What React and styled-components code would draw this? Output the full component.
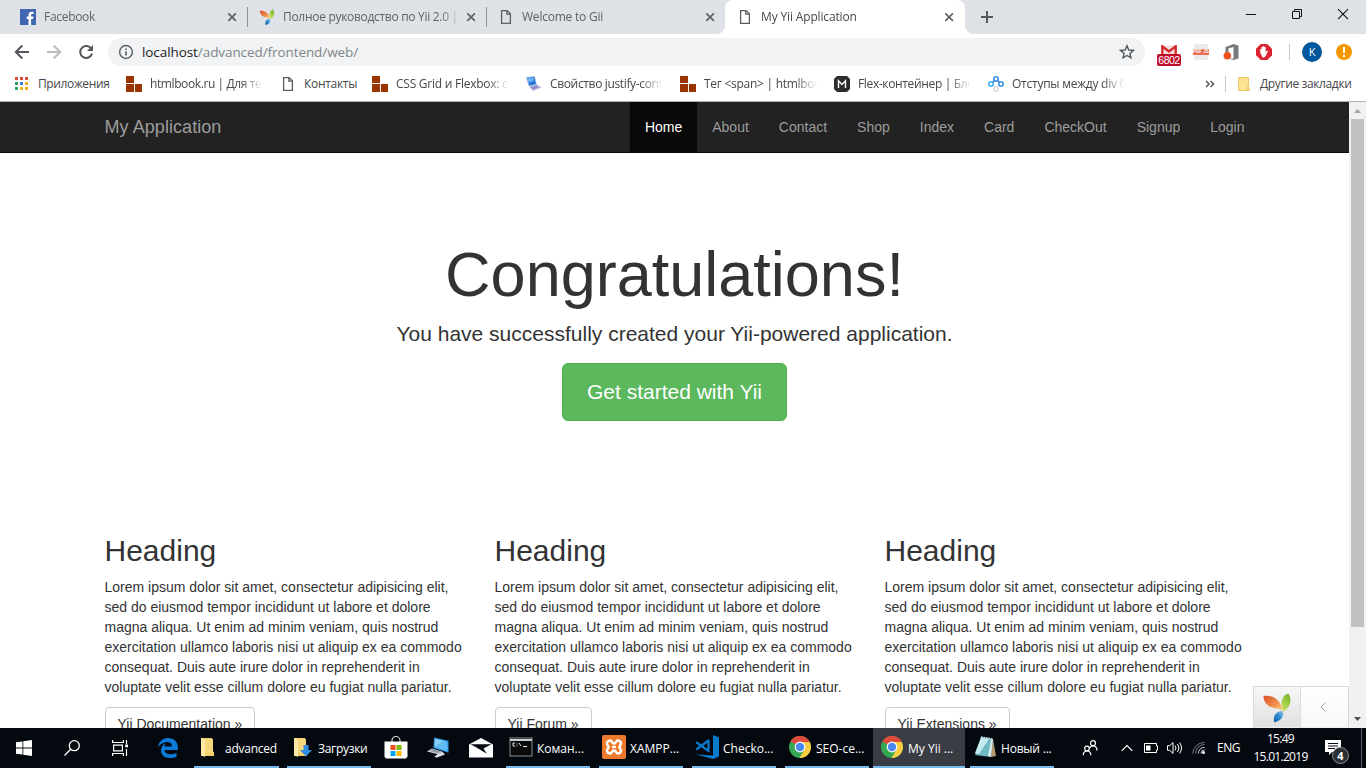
import React from "react";
import styled, { createGlobalStyle, css } from "styled-components";

const ui = `"Open Sans", "Noto Sans", sans-serif`;
const page = `"Liberation Sans", Arial, sans-serif`;

const GlobalStyle = createGlobalStyle`
  * { box-sizing: border-box; }
  body { margin: 0; background: #fff; overflow: hidden; }
  svg { display: block; flex: none; }
`;

const Screen = styled.div`
  width: 1366px;
  height: 768px;
  display: flex;
  flex-direction: column;
  overflow: hidden;
  font-family: ${ui};
`;

/* ---------- browser chrome ---------- */
const TabStrip = styled.div`
  height: 34px;
  flex: none;
  display: flex;
  padding-left: 8px;
  background: #dee1e6;
`;

const Tab = styled.div`
  position: relative;
  width: 239px;
  height: 34px;
  display: flex;
  align-items: center;
  padding: 0 7px 0 12px;
  font-size: 12px;
  color: #5f6368;
  ${(p) =>
    p.$line &&
    css`
      &::after {
        content: "";
        position: absolute;
        right: -1px;
        top: 7px;
        width: 1px;
        height: 20px;
        background: #8d9095;
      }
    `}
  ${(p) =>
    p.$active &&
    css`
      background: #fff;
      color: #45494d;
      border-radius: 8px 8px 0 0;
      width: 240px;
      &::before,
      &::after {
        content: "";
        position: absolute;
        bottom: 0;
        width: 8px;
        height: 8px;
      }
      &::before {
        left: -8px;
        background: radial-gradient(circle at 0 0, transparent 7.5px, #fff 8px);
      }
      &::after {
        right: -8px;
        background: radial-gradient(circle at 100% 0, transparent 7.5px, #fff 8px);
      }
    `}
`;

const TabTitle = styled.span`
  width: 174px;
  margin: 0 6px 0 8px;
  flex: none;
  overflow: hidden;
  white-space: nowrap;
  line-height: 20px;
  letter-spacing: ${(p) => p.$ls || 0}px;
  -webkit-mask-image: linear-gradient(to right, #000 158px, transparent 178px);
`;

const NewTab = styled.div`
  display: flex;
  align-items: center;
  margin-left: 15px;
`;

const WindowButtons = styled.div`
  margin-left: auto;
  display: flex;
  height: 28px;
  svg { width: 46px; }
`;

const Toolbar = styled.div`
  height: 36px;
  flex: none;
  display: flex;
  align-items: center;
  background: #fff;
  padding-left: 14px;
`;

const NavIcons = styled.div`
  display: flex;
  gap: 16px;
  margin-right: 14px;
`;

const Omnibox = styled.div`
  width: 1037px;
  height: 28px;
  border-radius: 14px;
  background: #f1f3f4;
  display: flex;
  align-items: center;
  padding: 0 10px;
  font-size: 14px;
  color: #80868b;
  svg:last-child { margin-left: auto; }
`;

const Url = styled.span`
  margin-left: 8px;
  line-height: 20px;
  font-size: 13.5px;
  letter-spacing: ${(p) => p.$ls || 0}px;
  b { font-weight: 400; color: #202124; }
`;

const Extensions = styled.div`
  display: flex;
  align-items: center;
  margin-left: 12px;
`;

const Gmail = styled.div`
  width: 24px;
  height: 21px;
  margin-top: 7px;
  display: flex;
  flex-direction: column;
  align-items: center;
  span {
    width: 24px;
    height: 12px;
    border-radius: 2px;
    background: #c00b2d;
    color: #fff;
    font: 10.5px/12px ${page};
    text-align: center;
    letter-spacing: -0.5px;
  }
`;

const PdfIcon = styled.div`
  width: 14px;
  height: 16px;
  margin: 0 15px 0 13px;
  padding-top: 5px;
  background: #ececec;
  span {
    display: block;
    height: 6px;
    margin: 0 -1px;
    background: #ea6a52;
    color: #fff;
    font: bold 4.5px/6px ${page};
    text-align: center;
    white-space: nowrap;
  }
`;

const Divider = styled.div`
  width: 1px;
  height: 16px;
  background: #c8cbcf;
  margin: 0 ${(p) => p.$r}px 0 ${(p) => p.$l}px;
`;

const Avatar = styled.div`
  width: 20px;
  height: 20px;
  border-radius: 50%;
  background: #01579b;
  color: #fff;
  font: 11px/20px ${ui};
  text-align: center;
`;

const Warn = styled.div`
  width: 16px;
  height: 16px;
  border-radius: 50%;
  background: #f29900;
  color: #fff;
  margin-left: 14px;
  display: flex;
  align-items: center;
  justify-content: center;
`;

const BlockIcon = styled.svg`
  margin-left: 17px;
`;

const Bookmarks = styled.div`
  height: 32px;
  flex: none;
  display: flex;
  align-items: center;
  background: #fff;
  border-bottom: 1px solid #b4b4b4;
  padding: 0 14px 4px 13px;
  font-size: 12px;
  color: #45484c;
`;

const Bookmark = styled.div`
  display: flex;
  align-items: center;
  gap: 8px;
  margin-right: 17px;
`;

const BookmarkName = styled.span`
  width: ${(p) => p.$w}px;
  white-space: nowrap;
  line-height: 18px;
  letter-spacing: ${(p) => p.$ls || 0}px;
  ${(p) => p.$fade && css`-webkit-mask-image: linear-gradient(to right, #000 calc(100% - 22px), transparent);`}
`;

const BookmarkEnd = styled.div`
  margin-left: auto;
  display: flex;
  align-items: center;
  ${BookmarkName} { margin-left: 8px; }
`;

/* ---------- web page ---------- */
const Viewport = styled.div`
  position: relative;
  height: 626px;
  flex: none;
  display: flex;
  overflow: hidden;
  font-family: ${page};
  color: #333;
`;

const Site = styled.div`
  width: 1349px;
  height: 626px;
  overflow: hidden;
`;

const Navbar = styled.div`
  height: 51px;
  background: #222;
  border-bottom: 1px solid #080808;
  padding: 0 89.5px 0 104.5px;
  display: flex;
  justify-content: space-between;
`;

const Brand = styled.div`
  font-size: 18px;
  line-height: 50px;
  color: #9d9d9d;
  letter-spacing: 0.06px;
`;

const Menu = styled.div`
  display: flex;
`;

const MenuItem = styled.div`
  padding: 0 15px;
  font-size: 14px;
  line-height: 50px;
  color: ${(p) => (p.$active ? "#fff" : "#9d9d9d")};
  background: ${(p) => (p.$active ? "#080808" : "transparent")};
`;

const Jumbotron = styled.div`
  padding: 87px 0 63px;
  display: flex;
  flex-direction: column;
  align-items: center;
`;

const Title = styled.h1`
  margin: 0 0 10px;
  font-weight: 500;
  font-size: 63px;
  line-height: 69.3px;
`;

const Lead = styled.p`
  margin: 0 0 14.3px;
  font-size: 21px;
  line-height: 29.4px;
`;

const StartButton = styled.div`
  height: 58px;
  padding: 0 24px;
  border: 1px solid #4cae4c;
  border-radius: 6px;
  background: #5cb85c;
  color: #fff;
  font-size: 21px;
  line-height: 56px;
`;

const Columns = styled.div`
  display: flex;
  padding: 50px 0 0 104.5px;
`;

const Column = styled.div`
  width: 390px;
  padding-right: 30px;
  h2 {
    margin: 0 0 10px;
    font-weight: 500;
    font-size: 30px;
    line-height: 33px;
  }
  p {
    margin: 0 0 10px;
    font-size: 14px;
    line-height: 20px;
  }
`;

const LinkButton = styled.div`
  display: inline-block;
  height: 34px;
  padding: 0 12px;
  border: 1px solid #ccc;
  border-radius: 4px;
  font-size: 14px;
  line-height: 32px;
`;

const Scrollbar = styled.div`
  width: 17px;
  background: #f1f1f1;
  display: flex;
  flex-direction: column;
  align-items: center;
`;

const Thumb = styled.div`
  width: 13px;
  height: 508px;
  background: #c1c1c1;
  margin-bottom: 84px;
`;

const DebugBar = styled.div`
  position: absolute;
  right: 17px;
  bottom: 0;
  width: 96px;
  height: 42px;
  display: flex;
  border: 1px solid #d9d9d9;
  border-bottom-color: #eee;
`;

const DebugLogo = styled.div`
  width: 47px;
  display: flex;
  justify-content: center;
  align-items: center;
  background: linear-gradient(#f7f7f7, #e0e0e0);
  border-right: 1px solid #ddd;
`;

const DebugToggle = styled.div`
  flex: 1;
  padding-right: 3px;
  display: flex;
  justify-content: center;
  align-items: center;
  background: linear-gradient(#fff, #f7f7f7);
`;

/* ---------- taskbar ---------- */
const Taskbar = styled.div`
  height: 40px;
  flex: none;
  display: flex;
  background: #040910;
  color: #fff;
  font-size: 12px;
`;

const Launcher = styled.div`
  width: ${(p) => p.$w}px;
  padding-right: ${(p) => p.$shift || 0}px;
  display: flex;
  align-items: center;
  justify-content: center;
`;

const Task = styled.div`
  width: ${(p) => p.$w || 84}px;
  margin-right: ${(p) => p.$gap ?? 9}px;
  padding-left: ${(p) => p.$pad || 3}px;
  display: flex;
  align-items: center;
  gap: 4px;
  border-bottom: 2px solid #76b9ed;
  background: ${(p) => (p.$active ? "#393d43" : "transparent")};
  white-space: nowrap;
  span {
    padding-top: 2px;
    letter-spacing: ${(p) => p.$ls || 0}px;
  }
`;

const Tray = styled.div`
  margin-left: auto;
  display: flex;
  align-items: center;
`;

const TrayIcon = styled.div`
  width: ${(p) => p.$w}px;
  display: flex;
  justify-content: center;
`;

const Lang = styled.div`
  width: 24px;
  margin-left: 18px;
  line-height: 40px;
  letter-spacing: -0.5px;
`;

const Clock = styled.div`
  width: 79px;
  text-align: center;
  line-height: 18px;
  letter-spacing: -0.7px;
`;

const Notice = styled.div`
  position: relative;
  width: 26px;
  height: 40px;
  margin-right: 15px;
  display: flex;
  align-items: center;
  justify-content: center;
`;

const Badge = styled.div`
  position: absolute;
  left: 12px;
  top: 19px;
  width: 17px;
  height: 17px;
  border-radius: 50%;
  border: 1px solid #8b8e92;
  background: #2b2f34;
  font: bold 11px/15px ${ui};
  text-align: center;
`;

const ShowDesktop = styled.div`
  width: 5px;
  height: 40px;
  border-left: 1px solid #5c6066;
`;

/* ---------- drawings ---------- */
const Facebook = () => (
  <svg width="16" height="16" viewBox="0 0 16 16">
    <rect width="16" height="16" fill="#4267b2" />
    <path d="M8.500 16V10H6.700V7.600h1.800V6c0-2 1.200-3.200 3.200-3.200h1.800V5H12.300c-1 0-1.200.5-1.200 1.300v1.300h2.300L13 10h-1.900v6z" fill="#fff" />
  </svg>
);

const YiiLogo = ({ w = 16, h = 16 }) => (
  <svg width={w} height={h} viewBox="0 0 32 32">
    <defs>
      <linearGradient id="yo" x1="0" y1="0" x2="1" y2="1">
        <stop offset="0" stopColor="#d9512c" />
        <stop offset=".6" stopColor="#f0904a" />
        <stop offset="1" stopColor="#fbd98c" />
      </linearGradient>
      <linearGradient id="yg" x1="0.8" y1="0" x2="0.3" y2="1">
        <stop offset="0" stopColor="#6fb531" />
        <stop offset="1" stopColor="#cbe05a" />
      </linearGradient>
      <linearGradient id="yb" x1="1" y1="0" x2="0" y2="1">
        <stop offset="0" stopColor="#8fc8f0" />
        <stop offset=".5" stopColor="#2f87cc" />
        <stop offset="1" stopColor="#0a5fa8" />
      </linearGradient>
    </defs>
    <path d="M1.500 4C9 2 16 6 19.500 12C21 14.500 21.500 17 21.500 20C20 17.500 17 17.500 13 16.500C6 15 2 11 1.500 4Z" fill="url(#yo)" />
    <path d="M28 1C32.500 7 30.500 16 22.500 20.500C22 18 21.500 15.500 21 13C20.500 7 22.500 3 28 1Z" fill="url(#yg)" />
    <path d="M21.500 19.500C25 24 20 31 13 32C11.500 26 14 20.500 21.500 19.500Z" fill="url(#yb)" />
  </svg>
);

const Doc = () => (
  <svg width="16" height="16" viewBox="0 0 16 16" fill="none" stroke="#5b5e62" strokeWidth="1.3">
    <path d="M3.600 1.600h5.600l3.200 3.200v9.600H3.600zM8.800 1.600v3.600h3.600" />
  </svg>
);

const Close = () => (
  <svg width="16" height="16" viewBox="0 0 16 16" stroke="#5f6368" strokeWidth="1.700">
    <path d="M4.300 4.300l7.600 7.600M11.900 4.300l-7.600 7.600" />
  </svg>
);

const Squares = () => (
  <svg width="16" height="16" viewBox="0 0 16 16" fill="#993300">
    <path d="M0 0h8v7H0zM0 8h8v8H0zM9 8h7v8H9z" />
  </svg>
);

const Apps = () => (
  <svg width="17" height="16" viewBox="0 0 17 16">
    {["#dd4b3e", "#dd4b3e", "#dd4b3e", "#2da262", "#3f7fe0", "#f2b01e", "#2da262", "#f2b01e", "#f2b01e"].map((c, i) => (
      <rect key={i} x={2 + (i % 3) * 5} y={1 + Math.floor(i / 3) * 5} width="3" height="3" fill={c} />
    ))}
  </svg>
);

const Laptop = () => (
  <svg width="24" height="24" viewBox="0 0 24 24">
    <path d="M8 1.500l14.500 3.300v12L7.500 12z" fill="#2b8fd6" />
    <path d="M9 2.800l12.500 2.800v9.700L8.600 11.200z" fill="#5cbcf3" />
    <path d="M9 2.800l9 2-9.400 6z" fill="#86d0f8" />
    <path d="M6 12.500l10.500 3.300-4.500 2.400L.8 15.600z" fill="#c3ccd3" />
    <path d="M6.500 13.300l8 2.500-2.500 1.200-8-2z" fill="#8b969e" />
    <path d="M12.500 17.500l4-1.800 2.500 2.800-8.500 3.300-2-1.300z" fill="#d8dee2" />
  </svg>
);

const BookmarkLaptop = () => (
  <svg width="16" height="16" viewBox="0 0 16 16">
    <path d="M.5 1.500L8.500.5l2 8L3 10z" fill="#2673d8" stroke="#a8c8ec" strokeWidth=".7" />
    <path d="M1.500 2.500l6-1 .6 3L2.500 7z" fill="#6db4f5" />
    <path d="M3 10.500l8-2 4.500 3L7 15z" fill="#bdbbe0" />
    <path d="M4.500 11l6-1.600 2.500 1.800-6 2.200z" fill="#8e8cc6" />
  </svg>
);

const MSquare = () => (
  <svg width="16" height="16" viewBox="0 0 16 16">
    <path d="M3 0h10l3 3v10l-3 3H3l-3-3V3z" fill="#2c2c2c" />
    <path d="M4.500 12V4.800L8 8.500l3.500-3.700V12" fill="none" stroke="#fff" strokeWidth="1.400" />
  </svg>
);

const Dots = () => (
  <svg width="16" height="16" viewBox="0 0 16 16" fill="none" strokeWidth="1.600">
    <circle cx="8" cy="3" r="2.200" stroke="#3a8de0" />
    <circle cx="3" cy="8" r="2.200" stroke="#3fb4f0" />
    <circle cx="13" cy="8" r="2.200" stroke="#3a8de0" />
    <circle cx="8" cy="13" r="2.200" stroke="#dcdcdc" />
    <path d="M4.500 6.500l2-2M9.500 4.500l2 2" stroke="#3a8de0" />
  </svg>
);

const Folder = ({ arrow }) => (
  <svg width="24" height="26" viewBox="0 0 24 26">
    <path d="M4 4h11v13l2 1v4H4z" fill="#f3cf6b" />
    <path d="M4 4l4 2v17l-4-2z" fill="#ffe9a6" />
    <path d="M8 5h8v14H8z" fill="#f7d77c" />
    {arrow && <path d="M13.500 11h5v5h3.500L16 22.500 10 16h3.500z" fill="#2f8fe0" />}
  </svg>
);

const Chrome = () => (
  <svg width="24" height="24" viewBox="0 0 24 24">
    <circle cx="12" cy="12" r="11" fill="#34a853" />
    <path d="M12 12L2.500 6.500A11 11 0 0 1 21.500 6.500z" fill="#de4b3c" />
    <path d="M2.500 6.500A11 11 0 0 1 21.500 6.500L12 7z" fill="#de4b3c" />
    <path d="M12 7h9.800A11 11 0 0 1 11.500 23L16.500 14.500z" fill="#fccd43" />
    <circle cx="12" cy="12" r="5.400" fill="#fff" />
    <circle cx="12" cy="12" r="4.200" fill="#4a87f0" />
  </svg>
);

const Cmd = () => (
  <svg width="24" height="24" viewBox="0 0 24 24">
    <rect x="1" y="3" width="22" height="18" fill="#0a0a0a" stroke="#8c8f92" />
    <path d="M1 4h22v2H1z" fill="#c9ccce" />
    <path d="M6 8H4v3h2M8 8.500v.8M8 10.500v.8M10 8l2 3M14 11.500h4" stroke="#e8e8e8" fill="none" />
  </svg>
);

const Xampp = () => (
  <svg width="24" height="24" viewBox="0 0 24 24">
    <rect width="24" height="24" rx="2" fill="#ee7a2e" />
    <path
      d="M8 5.500c2.500 0 1.500 3 4 3s1.500-3 4-3 4 3 2.200 5c-1 1.200-1 1.800 0 3 1.800 2 .3 5-2.200 5s-1.500-3-4-3-1.500 3-4 3-4-3-2.200-5c1-1.200 1-1.800 0-3-1.800-2-.3-5 2.200-5z"
      fill="none" stroke="#fff" strokeWidth="2.600"
    />
    <path d="M10 12h4" stroke="#fff" strokeWidth="2.400" />
  </svg>
);

const VsCode = () => (
  <svg width="24" height="24" viewBox="0 0 24 24">
    <path d="M18 0l6 2.500v19L18 24 1 19.500l17 1z" fill="#0a7acc" />
    <path d="M1.200 7.200L13.500 16V5.500L1.200 14.500" fill="none" stroke="#0a7acc" strokeWidth="2.200" strokeLinejoin="round" />
  </svg>
);

const Notepad = () => (
  <svg width="24" height="24" viewBox="0 0 24 24">
    <path d="M20 4l3 17-5 1z" fill="#b59b6c" />
    <path d="M8 2l12 2-2 18-16-2z" fill="#6fb9c4" />
    <path d="M8 3l8 1L6 19l-4-1z" fill="#c4ecef" />
    <path d="M18 5l2-1-2 18-3-1z" fill="#dfe8e8" />
    <path d="M8 2l12 2" stroke="#eef" strokeWidth="1.500" strokeDasharray="1.500 1" />
  </svg>
);

/* ---------- content ---------- */
const tabs = [
  { icon: <Facebook />, title: "Facebook", line: true, ls: -0.3 },
  { icon: <YiiLogo />, title: "Полное руководство по Yii 2.0 |", line: true, ls: -0.3 },
  { icon: <Doc />, title: "Welcome to Gii", ls: -0.22 },
  { icon: <Doc />, title: "My Yii Application", active: true, ls: -0.15 },
];

const bookmarks = [
  { icon: <Apps />, name: "Приложения", w: 71, ls: -0.38 },
  { icon: <Squares />, name: "htmlbook.ru | Для тех", w: 113, fade: true, ls: -0.4 },
  { icon: <Doc />, name: "Контакты", w: 51, ls: -0.3 },
  { icon: <Squares />, name: "CSS Grid и Flexbox: ср", w: 113, fade: true, ls: -0.25 },
  { icon: <BookmarkLaptop />, name: "Свойство justify-cont", w: 113, fade: true, ls: -0.35 },
  { icon: <Squares />, name: "Тег <span> | htmlboo", w: 113, fade: true, ls: -0.28 },
  { icon: <MSquare />, name: "Flex-контейнер | Бло", w: 113, fade: true, ls: -0.35 },
  { icon: <Dots />, name: "Отступы между div б", w: 113, fade: true, ls: -0.25 },
];

const menu = ["Home", "About", "Contact", "Shop", "Index", "Card", "CheckOut", "Signup", "Login"];
const lorem =
  "Lorem ipsum dolor sit amet, consectetur adipisicing elit, sed do eiusmod tempor incididunt ut labore et dolore magna aliqua. Ut enim ad minim veniam, quis nostrud exercitation ullamco laboris nisi ut aliquip ex ea commodo consequat. Duis aute irure dolor in reprehenderit in voluptate velit esse cillum dolore eu fugiat nulla pariatur.";

export default function App() {
  return (
    <Screen>
      <GlobalStyle />
      <TabStrip>
        {tabs.map((t) => (
          <Tab key={t.title} $line={t.line} $active={t.active}>
            {t.icon}
            <TabTitle $ls={t.ls}>{t.title}</TabTitle>
            <Close />
          </Tab>
        ))}
        <NewTab>
          <svg width="14" height="14" viewBox="0 0 14 14" stroke="#54585c" strokeWidth="2">
            <path d="M7 1v12M1 7h12" />
          </svg>
        </NewTab>
        <WindowButtons>
          <svg height="28" viewBox="0 0 46 28" stroke="#111" fill="none"><path d="M18 14.500h10" /></svg>
          <svg height="28" viewBox="0 0 46 28" stroke="#111" fill="none">
            <path d="M18.500 11.500h7v7h-7zM20.500 11.500v-2h7v7h-2" />
          </svg>
          <svg height="28" viewBox="0 0 46 28" stroke="#111" fill="none" strokeWidth="1.100"><path d="M18 9.200l10 10M28 9.200l-10 10" /></svg>
        </WindowButtons>
      </TabStrip>

      <Toolbar>
        <NavIcons>
          <svg width="16" height="16" viewBox="0 0 16 16" fill="none" stroke="#54585c" strokeWidth="2"><path d="M15 8H2.500M8.300 1.500L1.800 8l6.500 6.500" /></svg>
          <svg width="16" height="16" viewBox="0 0 16 16" fill="none" stroke="#babcbe" strokeWidth="2"><path d="M1 8h12.500M7.700 1.500L14.200 8l-6.500 6.500" /></svg>
          <svg width="16" height="16" viewBox="0 0 16 16" fill="none" stroke="#54585c" strokeWidth="2">
            <path d="M13.500 5.200A6 6 0 1 0 14 9.500" />
            <path d="M15 1v6H9z" fill="#54585c" stroke="none" />
          </svg>
        </NavIcons>
        <Omnibox>
          <svg width="16" height="16" viewBox="0 0 16 16" fill="none" stroke="#5f6368" strokeWidth="1.500">
            <circle cx="8" cy="8" r="6.400" />
            <path d="M8 7.200v4.300M8 4.400v1.700" strokeWidth="1.700" />
          </svg>
          <Url $ls={-0.08}><b>localhost</b>/advanced/frontend/web/</Url>
          <svg width="16" height="16" viewBox="0 0 16 16" fill="none" stroke="#54585c" strokeWidth="1.400">
            <path d="M8 1.800l1.800 4.200 4.600.4-3.500 3 1.100 4.500L8 11.500l-4 2.400 1.100-4.500-3.500-3 4.600-.4z" />
          </svg>
        </Omnibox>
        <Extensions>
          <Gmail>
            <svg width="16" height="9" viewBox="0 0 16 9">
              <path d="M0 .5h16V9H0z" fill="#f3dede" />
              <path d="M1.300 9V1.300L8 6.500l6.700-5.200V9" fill="none" stroke="#cf2a27" strokeWidth="2.300" />
            </svg>
            <span>6802</span>
          </Gmail>
          <PdfIcon><span>PDF JS</span></PdfIcon>
          <svg width="16" height="16" viewBox="0 0 16 16">
            <path d="M2.500 3l8-3L15.500 1.500v13L10.500 16l-5-1.500 5 .2V3L5.500 4.500V10h-3z" fill="#777b80" />
            <circle cx="4.300" cy="11.800" r="3.800" fill="#f0511e" />
          </svg>
          <BlockIcon width="16" height="16" viewBox="0 0 16 16">
            <path d="M4.800 0h6.400L16 4.800v6.400L11.200 16H4.800L0 11.200V4.800z" fill="#dc2430" />
            <path d="M4.200 8.500V5h1.300v3V3h1.400v4.500V2.200h1.400v5.300V3h1.400v5l1.300-1.500 1 .8-2.500 5-1.500 1.200H6.500z" fill="#fff" />
          </BlockIcon>
          <Divider $l={17} $r={12} />
          <Avatar>K</Avatar>
          <Warn>
            <svg width="4" height="10" viewBox="0 0 4 10" fill="#fff"><path d="M1 0h2v6H1zM1 8h2v2H1z" /></svg>
          </Warn>
        </Extensions>
      </Toolbar>

      <Bookmarks>
        {bookmarks.map((b) => (
          <Bookmark key={b.name}>
            {b.icon}
            <BookmarkName $w={b.w} $fade={b.fade} $ls={b.ls}>{b.name}</BookmarkName>
          </Bookmark>
        ))}
        <BookmarkEnd>
          <svg width="10" height="8" viewBox="0 0 10 8" fill="none" stroke="#54585c" strokeWidth="1.500"><path d="M1 1l3 3-3 3M5.500 1l3 3-3 3" /></svg>
          <Divider $l={10} $r={10} />
          <svg width="16" height="16" viewBox="0 0 16 16">
            <path d="M2.500 1.500h10v9l1 .5v3.500h-11z" fill="#fde293" stroke="#ecca63" />
            <path d="M11.500 14.500v-4" stroke="#ecca63" />
          </svg>
          <BookmarkName $w={92} $ls={-0.38}>Другие закладки</BookmarkName>
        </BookmarkEnd>
      </Bookmarks>

      <Viewport>
        <Site>
          <Navbar>
            <Brand>My Application</Brand>
            <Menu>
              {menu.map((m) => <MenuItem key={m} $active={m === "Home"}>{m}</MenuItem>)}
            </Menu>
          </Navbar>
          <Jumbotron>
            <Title>Congratulations!</Title>
            <Lead>You have successfully created your Yii-powered application.</Lead>
            <StartButton>Get started with Yii</StartButton>
          </Jumbotron>
          <Columns>
            {["Yii Documentation »", "Yii Forum »", "Yii Extensions »"].map((l) => (
              <Column key={l}>
                <h2>Heading</h2>
                <p>{lorem}</p>
                <LinkButton>{l}</LinkButton>
              </Column>
            ))}
          </Columns>
        </Site>
        <Scrollbar>
          <svg width="17" height="17" viewBox="0 0 17 17" fill="#a3a3a3"><path d="M5 11l3.500-4 3.500 4z" /></svg>
          <Thumb />
          <svg width="17" height="17" viewBox="0 0 17 17" fill="#505050"><path d="M5 6l3.500 4L12 6z" /></svg>
        </Scrollbar>
        <DebugBar>
          <DebugLogo><YiiLogo w={30} h={31} /></DebugLogo>
          <DebugToggle>
            <svg width="6" height="10" viewBox="0 0 6 10" fill="none" stroke="#a0a0a0"><path d="M5.300.7L1 5l4.300 4.300" /></svg>
          </DebugToggle>
        </DebugBar>
      </Viewport>

      <Taskbar>
        <Launcher $w={48}>
          <svg width="16" height="16" viewBox="0 0 16 16" fill="#fff"><path d="M0 2.300l6.500-.9v6.100H0zM7.300 1.300L16 0v7.500H7.300zM0 8.400h6.500v6.200L0 13.700zM7.300 8.400H16V16l-8.700-1.300z" /></svg>
        </Launcher>
        <Launcher $w={48}>
          <svg width="16" height="16" viewBox="0 0 16 16" fill="none" stroke="#fff" strokeWidth="1.300"><circle cx="10.300" cy="5.700" r="5" /><path d="M6.700 9.300L.5 15.500" /></svg>
        </Launcher>
        <Launcher $w={48}>
          <svg width="16" height="16" viewBox="0 0 16 16" fill="none" stroke="#fff" strokeWidth="1.200"><path d="M.6 0v2.500h10.800V0M.6 16v-2.500h10.800V16M1.600 5.100h8.800v5.800H1.600zM14.500 0v4M14.500 9v7" /><path d="M13.200 4.500h2.800v2.800h-2.800z" fill="#fff" stroke="none" /></svg>
        </Launcher>
        <Launcher $w={50} $shift={2}>
          <svg width="20" height="20" viewBox="0 0 20 20" fill="#0a7bd8">
            <path d="M0 9.300C.7 4 4.300 0 10 0c6 0 10 4 10 10v2H6.500c.2 3 3 4.300 6 4.300 2.300 0 4.300-.6 6-1.600v4C16.500 19.600 14.200 20 11.500 20 6.500 20 3 17 3 12.500c0-3.300 2-6 5-7.500-1 1.100-1.400 2.300-1.500 3.500h7.300C13.800 5.700 12.300 4.100 9.300 4.100 5.500 4.100 2 6.500 0 9.300z" />
          </svg>
        </Launcher>
        <Task $w={85} $gap={8} $ls={-0.25}><Folder /><span>advanced</span></Task>
        <Task $gap={4} $ls={-0.3}><Folder arrow /><span>Загрузки</span></Task>
        <Launcher $w={42}>
          <svg width="24" height="24" viewBox="0 0 24 24">
            <path d="M8 6V4.500a4 4 0 0 1 8 0V6" fill="none" stroke="#d0d0d0" strokeWidth="1.200" />
            <path d="M.5 5.500h23V20.500l-1.500 2H2l-1.500-2z" fill="#fff" />
            <path d="M6.500 9h5v5h-5z" fill="#f25022" /><path d="M12.500 9h5v5h-5z" fill="#7fba00" />
            <path d="M6.500 15h5v5h-5z" fill="#00a4ef" /><path d="M12.500 15h5v5h-5z" fill="#ffb900" />
          </svg>
        </Launcher>
        <Launcher $w={42}><Laptop /></Launcher>
        <Launcher $w={47} $shift={4}>
          <svg width="24" height="20" viewBox="0 0 24 20"><path d="M0 6.500L12 0l12 6.500V19.500H0z" fill="#fff" /><path d="M1.500 6.300h21l-8 4.200 3.300 5.200L7.500 9.500z" fill="#040910" /></svg>
        </Launcher>
        <Task><Cmd /><span>Коман...</span></Task>
        <Task><Xampp /><span>XAMPP...</span></Task>
        <Task><VsCode /><span>Checko...</span></Task>
        <Task $gap={4}><Chrome /><span>SEO-ce...</span></Task>
        <Task $active $w={92} $gap={5} $pad={7}><Chrome /><span>My Yii ...</span></Task>
        <Task $gap={0} $ls={-0.2}><Notepad /><span>Новый ...</span></Task>
        <Tray>
          <TrayIcon $w={26}>
            <svg width="16" height="16" viewBox="0 0 16 16" fill="none" stroke="#fff" strokeWidth="1.200">
              <circle cx="11" cy="3.200" r="2.500" /><circle cx="5" cy="8.500" r="2.300" />
              <path d="M1.200 15.300c0-2.500 1.500-4.300 3.800-4.300s3.800 1.800 3.800 4.300M7.500 8c.8-1.400 2-2 3.500-2 2.500 0 4 2 4 4.500" />
            </svg>
          </TrayIcon>
          <TrayIcon $w={48}>
            <svg width="12" height="8" viewBox="0 0 12 8" fill="none" stroke="#fff" strokeWidth="1.200"><path d="M.7 6.800L6 1.500l5.300 5.300" /></svg>
          </TrayIcon>
          <TrayIcon $w={0}>
            <svg width="16" height="10" viewBox="0 0 16 10"><path d="M1.500.5h12v2.500h1v4h-1v2.500h-12z" fill="none" stroke="#fff" /><path d="M3 2.500h4.500v5H3z" fill="#fff" /></svg>
          </TrayIcon>
          <TrayIcon $w={48}>
            <svg width="16" height="14" viewBox="0 0 16 14" fill="none" stroke="#fff"><path d="M.5 4.700h2.200L6 1.500v11L2.700 9.300H.5zM8 4.500a4 4 0 0 1 0 5M10.300 3a6.500 6.500 0 0 1 0 8M12.600 1.500a9.500 9.500 0 0 1 0 11" /></svg>
          </TrayIcon>
          <TrayIcon $w={0}>
            <svg width="14" height="12" viewBox="0 0 14 12" fill="none" stroke="#d0d2d4"><path d="M9 11.500A3.500 3.500 0 0 1 12.500 8M6.300 11.500A6.300 6.300 0 0 1 12.500 5.300" /><path d="M3.500 11.500a9 9 0 0 1 9-9M.7 11.500A11.500 11.500 0 0 1 12.500.5" stroke="#777b80" /><circle cx="11.500" cy="10.500" r="1.500" fill="#fff" stroke="none" /></svg>
          </TrayIcon>
          <Lang>ENG</Lang>
          <Clock>15:49<br />15.01.2019</Clock>
          <Notice>
            <svg width="16" height="16" viewBox="0 0 16 16" fill="#fff"><path d="M0 0h16v12H7l-3 3v-3H0z" /><path d="M3 3.500h10M3 6h10M3 8.500h7" stroke="#040910" /></svg>
            <Badge>4</Badge>
          </Notice>
          <ShowDesktop />
        </Tray>
      </Taskbar>
    </Screen>
  );
}
